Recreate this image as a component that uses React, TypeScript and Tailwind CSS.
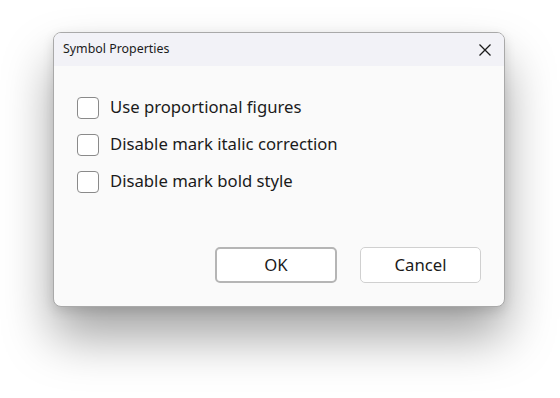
import React from "react";

function Check({ label }: { label: string }) {
  return (
    <label className="flex items-center h-[37px]">
      <span className="w-[22px] h-[22px] rounded-[4px] border border-[#8a8a8a] bg-white shrink-0" />
      <span className="ml-[11px] text-[16.7px] text-[#1b1b1b] leading-none">{label}</span>
    </label>
  );
}

export default function App() {
  return (
    <div className="w-[560px] h-[398px] bg-white pt-[32px] pl-[53px]" style={{ fontFamily: '"Noto Sans", sans-serif' }}>
      <div className="w-[452px] h-[275px] rounded-[8px] border border-[#a9a9a9] bg-[#fafafa] flex flex-col overflow-hidden shadow-[0_30px_50px_rgba(0,0,0,0.36),0_4px_12px_rgba(0,0,0,0.12)]">
        <div className="h-[33px] bg-[#f2f2f7] flex items-center justify-between pl-[9px] pr-[12px] shrink-0">
          <span className="text-[12.4px] text-[#1b1b1b]">Symbol Properties</span>
          <svg width="14" height="14" viewBox="0 0 14 14">
            <path d="M1.5 1.5 L12.5 12.5 M12.5 1.5 L1.5 12.5" stroke="#1b1b1b" strokeWidth="1.3" fill="none" />
          </svg>
        </div>
        <div className="flex flex-col pl-[23px] pt-[23px]">
          <Check label="Use proportional figures" />
          <Check label="Disable mark italic correction" />
          <Check label="Disable mark bold style" />
        </div>
        <div className="mt-auto flex justify-end gap-[23px] pr-[23px] pb-[23px]">
          <button className="w-[122px] h-[36px] rounded-[5px] border-2 border-[#b5b5b5] bg-white text-[16.7px] text-[#1b1b1b]">OK</button>
          <button className="w-[121px] h-[36px] rounded-[5px] border border-[#d0d0d0] bg-white text-[16.7px] text-[#1b1b1b]">Cancel</button>
        </div>
      </div>
    </div>
  );
}
